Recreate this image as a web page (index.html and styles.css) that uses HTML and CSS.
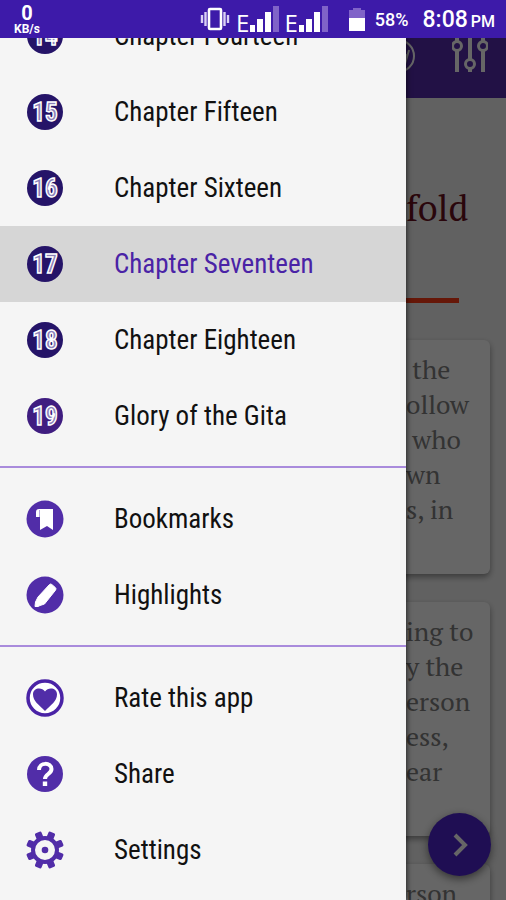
FILE: index.html
```html
<!DOCTYPE html>
<html lang="en">
<head>
<meta charset="utf-8">
<meta name="viewport" content="width=device-width, initial-scale=1">
<title>Chapter Seventeen</title>
<link rel="stylesheet" href="styles.css">
</head>
<body>
<div class="screen">
  <header class="status">
    <div class="speed"><span class="speed-value">0</span><span class="speed-unit">KB/s</span></div>
    <div class="indicators">
      <svg class="vibrate" viewBox="0 0 30 24" aria-hidden="true"><rect x="9" y="2" width="12" height="20" rx="1" fill="none" stroke="#fff" stroke-width="2.6"/><path d="M5.500 5v14M24.500 5v14M2 8v8M28 8v8" stroke="#d9d0f4" stroke-width="2.400"/></svg>
      <span class="network">E</span>
      <svg class="signal" viewBox="0 0 30 28" aria-hidden="true"><path d="M0 20h5v7H0zM7 14h6v13H7zM15 7h6v20h-6z" fill="#fff"/><path d="M23 1h6v26h-6z" fill="#8063c8"/></svg>
      <span class="network">E</span>
      <svg class="signal" viewBox="0 0 30 28" aria-hidden="true"><path d="M0 20h5v7H0zM7 14h6v13H7zM15 7h6v20h-6z" fill="#fff"/><path d="M23 1h6v26h-6z" fill="#8063c8"/></svg>
      <svg class="battery" viewBox="0 0 16 24" aria-hidden="true"><path d="M4 1h8v2h4v9H0V3h4z" fill="#8063c8"/><path d="M0 11h16v13H0z" fill="#fff"/></svg>
      <span class="percent">58%</span>
      <span class="clock">8:08<small>PM</small></span>
    </div>
  </header>

  <div class="stage">
    <div class="page">
      <div class="toolbar">
        <button class="tool" type="button" aria-label="Language"><svg viewBox="0 0 36 36"><circle cx="18" cy="18" r="16" fill="none" stroke="#fff" stroke-width="2"/><path d="M25 10v5M29 12l-4 14M22 26l4-10" stroke="#fff" stroke-width="2"/></svg></button>
        <button class="tool" type="button" aria-label="Display options"><svg viewBox="0 0 36 36"><g fill="none" stroke="#fff" stroke-width="4"><path d="M5 0v3M5 13v21M18 0v21M18 31v3M31 0v3M31 13v21"/><circle cx="5" cy="8" r="4.500" stroke-width="3"/><circle cx="18" cy="26" r="4.500" stroke-width="3"/><circle cx="31" cy="8" r="4.500" stroke-width="3"/></g></svg></button>
      </div>
      <main class="reading">
        <h1>fold</h1>
        <div class="rule"></div>
        <article class="card"><p>&nbsp;the<br>ollow<br>&nbsp;who<br>wn<br>s, in</p></article>
        <article class="card"><p>ing to<br>y the<br>erson<br>ess,<br>ear</p></article>
        <article class="card"><p>rson</p></article>
      </main>
      <button class="next" type="button" aria-label="Next"><svg viewBox="0 0 24 24"><path d="M7 2l10 10L7 22" fill="none" stroke="#fff" stroke-width="4"/></svg></button>
      <div class="scrim"></div>
    </div>

    <nav class="drawer">
      <a class="item" href="#c14"><svg class="icon num" viewBox="0 0 38 38"><circle cx="19" cy="19" r="18"/><text x="19" y="28">14</text></svg>Chapter Fourteen</a>
      <a class="item" href="#c15"><svg class="icon num" viewBox="0 0 38 38"><circle cx="19" cy="19" r="18"/><text x="19" y="28">15</text></svg>Chapter Fifteen</a>
      <a class="item" href="#c16"><svg class="icon num" viewBox="0 0 38 38"><circle cx="19" cy="19" r="18"/><text x="19" y="28">16</text></svg>Chapter Sixteen</a>
      <a class="item current" href="#c17" aria-current="page"><svg class="icon num" viewBox="0 0 38 38"><circle cx="19" cy="19" r="18"/><text x="19" y="28">17</text></svg>Chapter Seventeen</a>
      <a class="item" href="#c18"><svg class="icon num" viewBox="0 0 38 38"><circle cx="19" cy="19" r="18"/><text x="19" y="28">18</text></svg>Chapter Eighteen</a>
      <a class="item" href="#glory"><svg class="icon num violet" viewBox="0 0 38 38"><circle cx="19" cy="19" r="18"/><text x="19" y="28">19</text></svg>Glory of the Gita</a>
      <hr>
      <a class="item" href="#bookmarks"><svg class="icon" viewBox="0 0 38 38"><circle cx="19" cy="19" r="18.500" fill="#512da8"/><path d="M13 9h14v21l-6-4-7 4V17h-4v-5q0-3 3-3z" fill="#fff"/><path d="M13.500 10v7" stroke="#b9a7e0"/></svg>Bookmarks</a>
      <a class="item" href="#highlights"><svg class="icon" viewBox="0 0 38 38"><circle cx="19" cy="19" r="18.500" fill="#512da8"/><path d="M23.500 8.500q1-1 2.300 0l3.700 3.200q1 1 0 2.500L18.500 28l-4.500 1.500-2 1H9l.500-4.500 2.500-5z" fill="#fff" stroke="#fff" stroke-linejoin="round"/></svg>Highlights</a>
      <hr>
      <a class="item" href="#rate"><svg class="icon" viewBox="0 0 38 38"><circle cx="19" cy="19" r="17" fill="#fff" stroke="#4a23a6" stroke-width="3.500"/><path d="M19 32C13 26 7 22 7 15.500 7 8.500 16 8 19 12.500 22 8 31 8.500 31 15.500 31 22 25 26 19 32z" fill="#512da8"/></svg>Rate this app</a>
      <a class="item" href="#share"><svg class="icon" viewBox="0 0 38 38"><circle cx="19" cy="19" r="18" fill="#512da8"/><path d="M13 15c0-8 12.500-8 12.500-1 0 5-6.500 5-6.500 10" fill="none" stroke="#fff" stroke-width="4"/><path d="M16.800 26.500h4.400V31h-4.400z" fill="#fff"/></svg>Share</a>
      <a class="item" href="#settings"><svg class="icon" viewBox="0 0 38 38"><g fill="#512da8"><g transform="rotate(22.500 19 19)"><g id="teeth"><rect x="15.500" y="0" width="7" height="9" rx="1.500"/><rect x="15.500" y="29" width="7" height="9" rx="1.500"/><rect x="0" y="15.500" width="9" height="7" rx="1.500"/><rect x="29" y="15.500" width="9" height="7" rx="1.500"/></g><use href="#teeth" transform="rotate(45 19 19)"/></g></g><circle cx="19" cy="19" r="12" fill="#f5f5f5" stroke="#512da8" stroke-width="4"/><circle cx="19" cy="19" r="3.300" fill="#512da8"/></svg>Settings</a>
    </nav>
  </div>
</div>
</body>
</html>
```
FILE: styles.css
```css
* { box-sizing: border-box; }

body {
  margin: 0;
  font-family: "Roboto Condensed", Roboto, sans-serif;
}

.screen {
  display: flex;
  flex-direction: column;
  height: 100vh;
  overflow: hidden;
}

/* Status bar */
.status {
  flex: none;
  display: flex;
  justify-content: space-between;
  align-items: center;
  height: 38px;
  padding: 0 11px 0 14px;
  background: #3d1aa9;
  color: #fff;
  font-family: Roboto, sans-serif;
}

.speed {
  display: flex;
  flex-direction: column;
  align-items: center;
  font-weight: 700;
}
.speed-value { font-size: 20px; line-height: 20px; }
.speed-unit { font-size: 12px; line-height: 12px; }

.indicators { display: flex; align-items: center; height: 38px; }
.vibrate { width: 30px; height: 24px; margin-right: 2px; }
.network {
  align-self: flex-end;
  margin-left: 4px;
  font-family: "Open Sans", sans-serif;
  font-size: 24px;
  line-height: 30px;
}
.signal { width: 30px; height: 28px; margin-left: 1px; }
.battery { width: 16px; height: 24px; margin-left: 20px; }
.percent { margin-left: 10px; font-size: 18px; font-weight: 500; }
.clock { margin-left: 14px; font-size: 23px; font-weight: 500; }
.clock small { margin-left: 3px; font-size: 16px; }

/* Reading page beneath the drawer */
.stage { position: relative; flex: 1; min-height: 0; overflow: hidden; }
.page { height: 100%; overflow: hidden; background: #f3f3f3; }

.toolbar {
  display: flex;
  justify-content: flex-end;
  gap: 36px;
  height: 60px;
  padding: 0 18px;
  background: #552bad;
}
.tool {
  width: 36px;
  height: 36px;
  padding: 0;
  border: 0;
  background: none;
}
.tool svg { display: block; width: 36px; height: 36px; }

.reading {
  padding: 0 16px;
  font-family: "PT Serif", "Liberation Serif", serif;
}
.reading h1 {
  margin: 84px 0 64px;
  padding-left: calc(100% - 84px);
  color: #6a1020;
  font-size: 36px;
  font-weight: 400;
  line-height: 52px;
}
.rule { height: 5px; margin: 0 31px 37px; background: #ff3a14; }
.card {
  margin-bottom: 28px;
  padding: 12px 0 47px calc(100% - 84px);
  border-radius: 6px;
  background: #fff;
  box-shadow: 0 3px 6px rgba(0, 0, 0, 0.4);
}
.card p {
  margin: 0;
  color: #808080;
  font-size: 26px;
  line-height: 35px;
  white-space: nowrap;
}

.next {
  position: absolute;
  right: 15px;
  bottom: 24px;
  display: grid;
  place-items: center;
  width: 63px;
  height: 63px;
  padding: 0;
  border: 0;
  border-radius: 50%;
  background: #4f25d0;
  box-shadow: 0 3px 8px rgba(0, 0, 0, 0.5);
}
.next svg { width: 24px; height: 24px; }
.scrim { position: absolute; inset: 0; background: rgba(0, 0, 0, 0.6); }

/* Navigation drawer, scrolled to its end */
.drawer {
  position: absolute;
  inset: 0 100px 0 0;
  display: flex;
  flex-direction: column;
  justify-content: flex-end;
  padding-bottom: 12px;
  background: #f5f5f5;
  box-shadow: 1px 0 5px rgba(0, 0, 0, 0.6);
}
.item {
  flex: none;
  display: flex;
  align-items: center;
  gap: 50px;
  height: 76px;
  padding-left: 26px;
  color: #111;
  font-size: 27px;
  text-decoration: none;
}
.current { background: #d6d6d6; color: #4a23a6; }
.icon { flex: none; width: 38px; height: 38px; }
.num circle { fill: #251468; }
.violet circle { fill: #3f1d80; }
.num text {
  fill: #8b80b8;
  stroke: #fff;
  stroke-width: 1.4px;
  font-size: 25px;
  font-weight: 700;
  text-anchor: middle;
}
.drawer hr {
  flex: none;
  width: 100%;
  height: 2px;
  margin: 12px 0 13px;
  border: 0;
  background: #a98bdc;
}
```
